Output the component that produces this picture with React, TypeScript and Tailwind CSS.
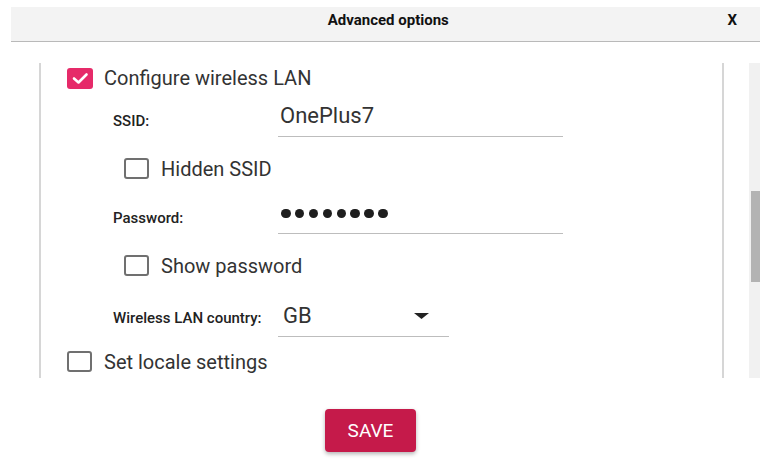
import React from 'react';

type BoxProps = { checked?: boolean };

// square-ish material checkbox used in the options list
const CheckBox = ({ checked = false }: BoxProps) => {
  if (checked) {
    return (
      <span className="flex h-[21px] w-[26px] shrink-0 items-center justify-center rounded-[3px] bg-[#e62a69]">
        <svg width="26" height="21" viewBox="0 0 26 21" fill="none">
          <polyline points="7,10.5 11.5,14.5 19.5,6.5" stroke="#fff" strokeWidth="2.6" strokeLinecap="round" strokeLinejoin="round" />
        </svg>
      </span>
    );
  }
  return <span className="block h-[21px] w-[25px] shrink-0 rounded-[3px] border-2 border-[#707070] bg-white" />;
};

const Option = ({ label, checked, indent }: { label: string; checked?: boolean; indent: string }) => (
  <div className={`flex h-[21px] items-center ${indent}`}>
    <CheckBox checked={checked} />
    <span className="ml-[12px] text-[20px] leading-[24px] text-[#333]">{label}</span>
  </div>
);

const FieldLabel = ({ text, pb }: { text: string; pb: string }) => (
  <div className={`w-[165px] shrink-0 self-end text-[15px] font-medium leading-[18px] text-[#222] ${pb}`}>{text}</div>
);

export default function App() {
  return (
    <div className="flex h-[468px] w-[760px] flex-col overflow-hidden bg-white" style={{ fontFamily: 'Roboto, "Liberation Sans", sans-serif' }}>
      {/* title bar */}
      <div className="ml-[11px] mt-[7px] flex h-[35px] shrink-0 items-start border-b-[1.5px] border-[#b9b9b9] bg-[#f3f3f3] pt-[3px]">
        <div className="flex-1 pl-[38px] text-center text-[15px] font-bold leading-[20px] text-[#111]">Advanced options</div>
        <div className="mr-[23px] text-[15px] font-bold leading-[20px] text-[#111]">X</div>
      </div>

      <div className="mt-[21px] flex h-[315px] shrink-0">
        {/* scrolling options panel */}
        <div className="ml-[39px] h-[315px] w-[685px] overflow-hidden border-x-2 border-[#d6d6d6]">
          <div className="flex h-[30px] items-center pl-[26px]">
            <CheckBox checked />
            <span className="ml-[11px] text-[20px] leading-[24px] text-[#333]">Configure wireless LAN</span>
          </div>

          <div className="ml-[72px] flex h-[44px]">
            <FieldLabel text="SSID:" pb="pb-[7px]" />
            <div className="w-[285px] border-b-[1.5px] border-[#bdbdbd] pl-[2px] pt-[10px] text-[22px] leading-[26px] text-[#333]">OnePlus7</div>
          </div>

          <div className="mt-[21px]">
            <Option label="Hidden SSID" indent="ml-[83px]" />
          </div>

          <div className="ml-[72px] mt-[11px] flex h-[44px]">
            <FieldLabel text="Password:" pb="pb-[7px]" />
            <div className="w-[285px] border-b-[1.5px] border-[#bdbdbd] pl-[3px] pt-[10px]">
              <div className="flex h-[26px] items-center gap-[4.4px]">
                {Array.from({ length: 8 }).map((_, i) => (
                  <span key={i} className="block h-[9px] w-[9.5px] rounded-full bg-[#1e1e1e]" />
                ))}
              </div>
            </div>
          </div>

          <div className="mt-[21px]">
            <Option label="Show password" indent="ml-[83px]" />
          </div>

          <div className="ml-[72px] mt-[17px] flex h-[44px]">
            <FieldLabel text="Wireless LAN country:" pb="pb-[10px]" />
            <div className="flex w-[171px] items-start justify-between border-b-[1.5px] border-[#bdbdbd] pl-[5px] pr-[20px] pt-[10px]">
              <span className="text-[22px] leading-[26px] text-[#333]">GB</span>
              <svg className="mt-[10px]" width="15" height="6" viewBox="0 0 15 6">
                <polygon points="0,0 15,0 7.5,6" fill="#222" />
              </svg>
            </div>
          </div>

          <div className="mt-[14px]">
            <Option label="Set locale settings" indent="ml-[26px]" />
          </div>
        </div>

        {/* scrollbar */}
        <div className="ml-[25px] h-[315px] w-[11px] bg-[#f1f1f1] pl-[2px] pt-[128px]">
          <div className="h-[91px] w-full bg-[#b3b3b3]" />
        </div>
      </div>

      <div className="mt-[31px] flex justify-center pr-[19px]">
        <button className="flex h-[43px] w-[91px] items-center justify-center rounded-[4px] bg-[#c51a4a] text-[19px] leading-none text-white shadow-[0_2px_4px_rgba(0,0,0,0.3)]">
          SAVE
        </button>
      </div>
    </div>
  );
}
